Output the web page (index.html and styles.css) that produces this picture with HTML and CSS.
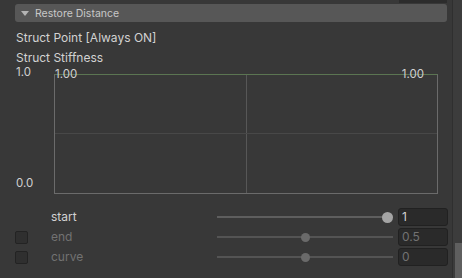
FILE: index.html
```html
<!DOCTYPE html>
<html lang="en">

<head>
   <meta charset="UTF-8">
   <meta name="viewport" content="width=device-width, initial-scale=1.0">
   <title>Restore Distance</title>
   <link rel="stylesheet" href="styles.css">
</head>

<body>
   <div class="inspector">
      <div class="content">
         <div class="stub"></div>
         <div class="foldout">
            <span class="arrow"></span>
            <span class="foldout-title">Restore Distance</span>
         </div>

         <div class="field">Struct Point [Always ON]</div>
         <div class="field field-short">Struct Stiffness</div>

         <div class="curve-field">
            <div class="axis">
               <span>1.0</span>
               <span>0.0</span>
            </div>
            <div class="graph">
               <span class="graph-label left">1.00</span>
               <span class="graph-label right">1.00</span>
            </div>
         </div>

         <div class="rows">
            <div class="row">
               <span class="check hidden"></span>
               <span class="row-label">start</span>
               <div class="slider">
                  <span class="thumb" style="left: 165px"></span>
               </div>
               <div class="num">1</div>
            </div>
            <div class="row disabled">
               <span class="check"></span>
               <span class="row-label">end</span>
               <div class="slider">
                  <span class="thumb" style="left: 84px"></span>
               </div>
               <div class="num">0.5</div>
            </div>
            <div class="row disabled">
               <span class="check"></span>
               <span class="row-label">curve</span>
               <div class="slider">
                  <span class="thumb" style="left: 84px"></span>
               </div>
               <div class="num">0</div>
            </div>
         </div>
      </div>

      <div class="scrollbar">
         <div class="scroll-thumb"></div>
      </div>
   </div>
</body>
</html>
```

FILE: styles.css
```css
* {
   margin: 0;
   padding: 0;
   box-sizing: border-box;
}

body {
   background: #383838;
   font-family: Inter, "Noto Sans", sans-serif;
   font-size: 12px;
   color: #d2d2d2;
   width: 462px;
   height: 278px;
   overflow: hidden;
}

.inspector {
   display: flex;
   height: 278px;
}

.content {
   width: 452px;
   padding-left: 15px;
}

.stub {
   margin-left: 384px;
   width: 48px;
   height: 3px;
   background: #2c2c2c;
}

.foldout {
   margin-top: 1px;
   width: 432px;
   height: 18px;
   background: #575757;
   border-radius: 3px;
   display: flex;
   align-items: center;
   padding-left: 6px;
}

.arrow {
   width: 0;
   height: 0;
   border-left: 4px solid transparent;
   border-right: 4px solid transparent;
   border-top: 5px solid #b4b4b4;
   margin-right: 6px;
}

.foldout-title {
   font-size: 10.5px;
   color: #c8c8c8;
}

.field {
   margin-top: 6px;
   padding-left: 1px;
   height: 20px;
   line-height: 20px;
}

.field-short {
   margin-top: 0;
   height: 18px;
}

.curve-field {
   display: flex;
   height: 128px;
}

.axis {
   width: 39px;
   display: flex;
   flex-direction: column;
   justify-content: space-between;
   padding-left: 1px;
   padding-bottom: 4px;
   font-size: 11.5px;
   line-height: 13px;
   color: #d0d0d0;
}

.graph {
   position: relative;
   margin-top: 8px;
   width: 384px;
   height: 120px;
   border: 1px solid #6b6b6b;
   border-top-color: #5b7552;
   background:
      linear-gradient(#484848, #484848) 0 58px / 100% 1px no-repeat,
      linear-gradient(#575757, #575757) 191px 0 / 1px 100% no-repeat;
}

.graph-label {
   position: absolute;
   top: -7px;
   font-size: 11.5px;
   line-height: 13px;
   color: #d0d0d0;
}

.graph-label.left {
   left: 0;
}

.graph-label.right {
   right: 13px;
}

.rows {
   margin-top: 14px;
   display: flex;
   flex-direction: column;
   gap: 2px;
}

.row {
   display: flex;
   align-items: center;
   height: 18px;
}

.check {
   width: 13px;
   height: 13px;
   background: #2f2f2f;
   border: 1px solid #232323;
   border-radius: 2px;
}

.check.hidden {
   visibility: hidden;
}

.row-label {
   margin-left: 23px;
   width: 166px;
   padding-bottom: 1px;
}

.slider {
   position: relative;
   width: 176px;
   height: 2px;
   background: #5e5e5e;
}

.thumb {
   position: absolute;
   top: -4px;
   width: 11px;
   height: 11px;
   border-radius: 50%;
   background: #a4a4a4;
}

.num {
   margin-left: 5px;
   width: 50px;
   height: 18px;
   background: #2a2a2a;
   border: 1px solid #212121;
   border-radius: 3px;
   padding-left: 3px;
   line-height: 16px;
}

.disabled {
   color: #727272;
}

.disabled .slider {
   background: #545454;
}

.disabled .thumb {
   top: -3px;
   width: 9px;
   height: 9px;
   background: #6a6a6a;
}

.scrollbar {
   width: 10px;
   border-left: 1px solid #2f2f2f;
   background: #3c3c3c;
   display: flex;
   flex-direction: column;
   justify-content: flex-end;
   padding-left: 2px;
}

.scroll-thumb {
   height: 35px;
   background: #5f5f5f;
}
```
